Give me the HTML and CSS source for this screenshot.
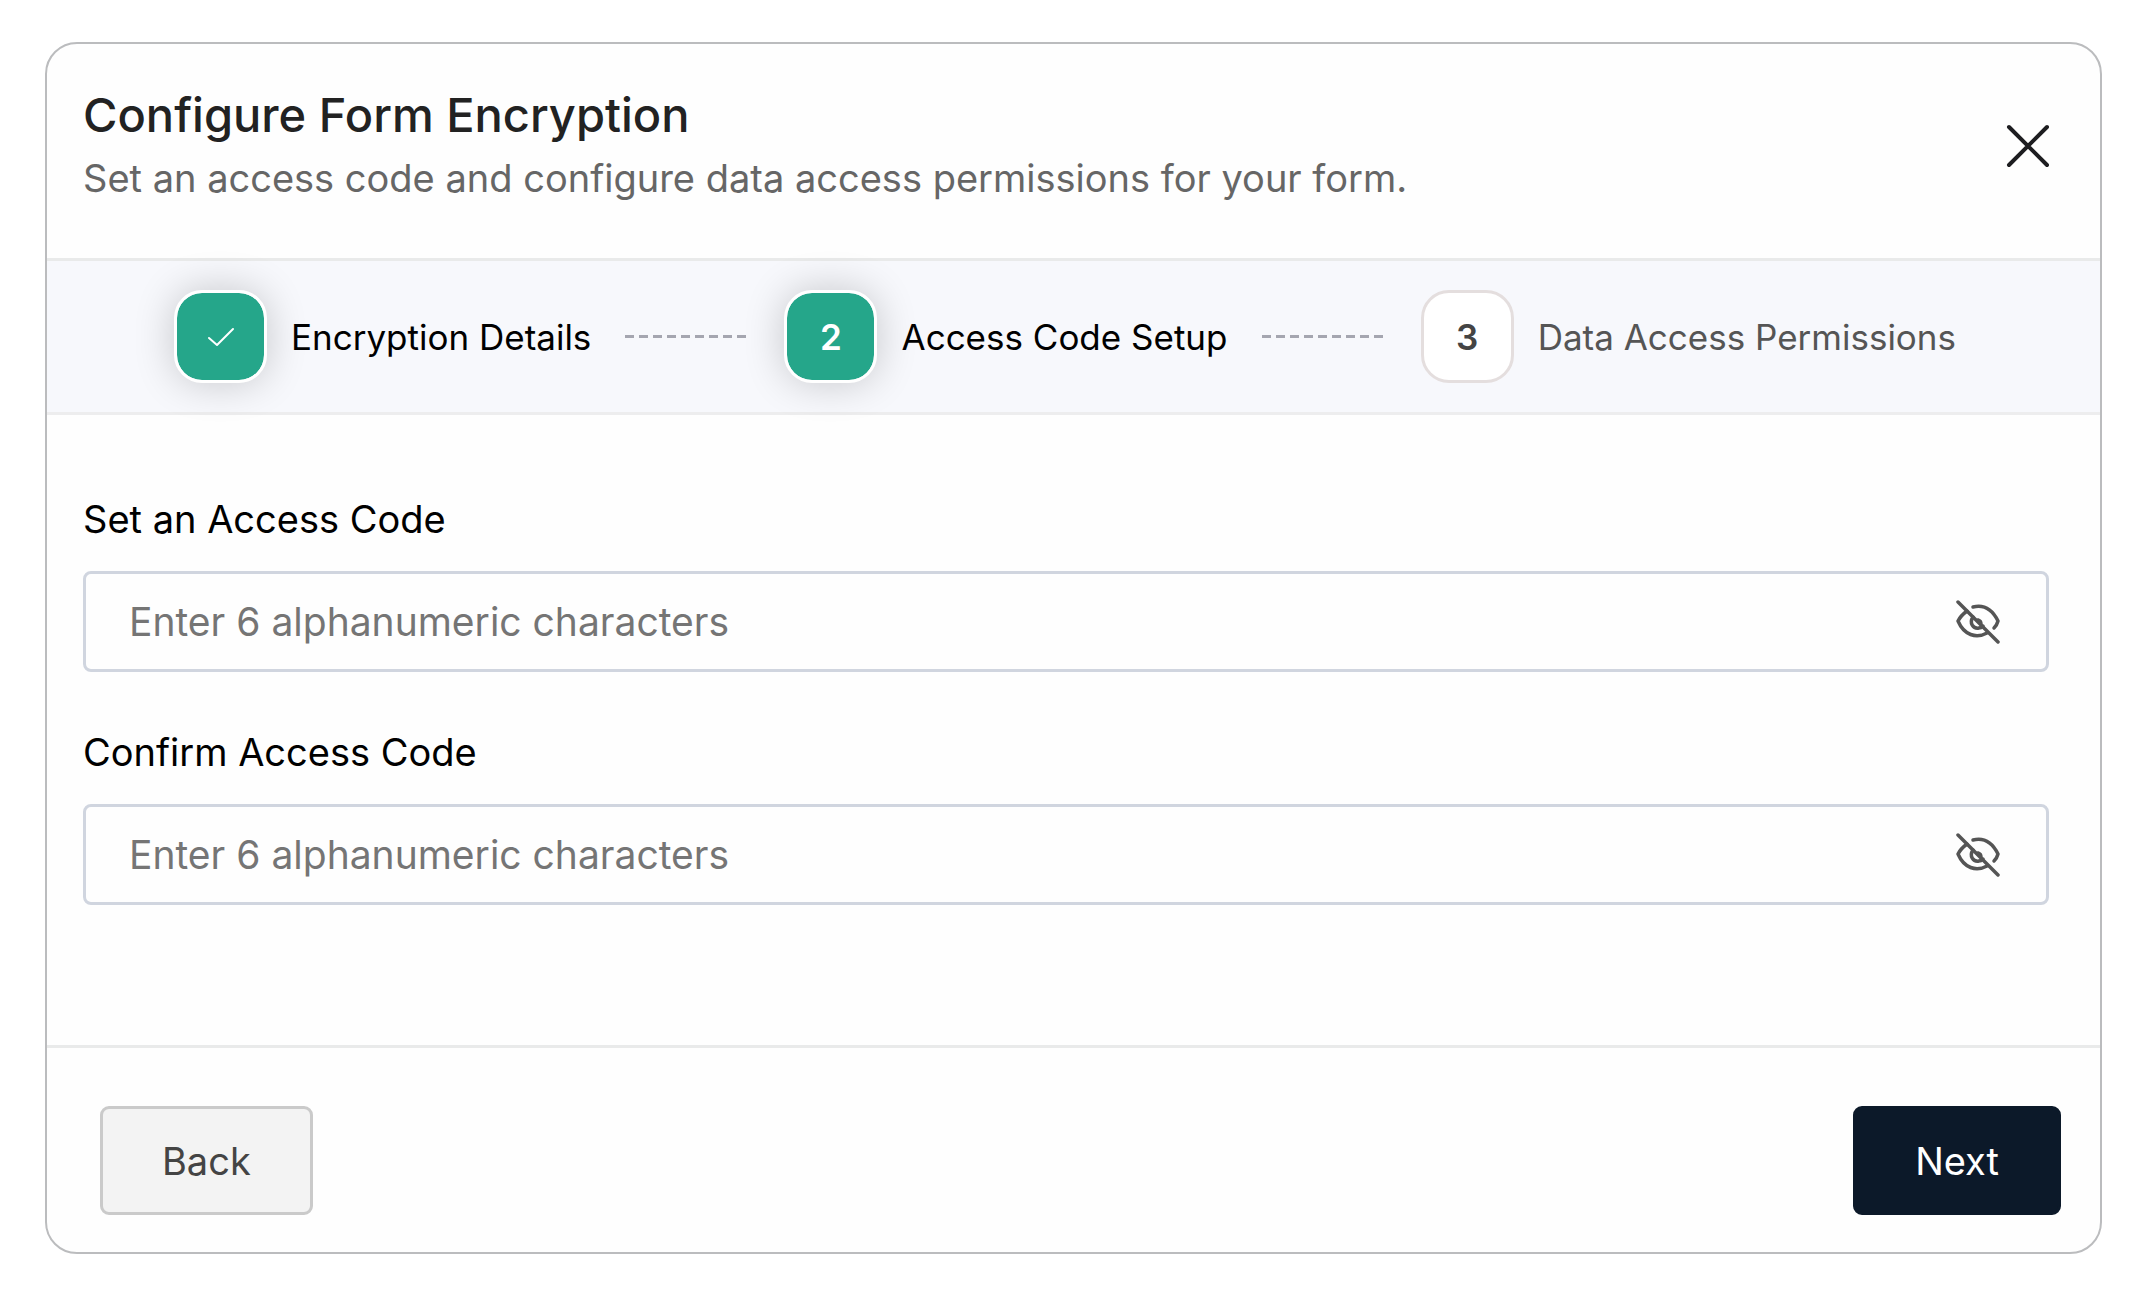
FILE: index.html
```html
<!DOCTYPE html>
<html lang="en">
<head>
<meta charset="utf-8">
<meta name="viewport" content="width=device-width, initial-scale=1">
<title>Configure Form Encryption</title>
<link rel="stylesheet" href="styles.css">
</head>
<body>
<main class="dialog">
  <header class="dialog-header">
    <div class="heading">
      <h1 class="title">Configure Form Encryption</h1>
      <p class="subtitle">Set an access code and configure data access permissions for your form.</p>
    </div>
    <button class="icon-button" type="button" aria-label="Close">
      <svg class="close-icon" viewBox="0 0 44 44" aria-hidden="true"><path d="M3 3L41 41M41 3L3 41"/></svg>
    </button>
  </header>

  <ol class="steps">
    <li class="step">
      <span class="badge badge-active">
        <svg class="check-icon" viewBox="0 0 28 20" aria-hidden="true"><path d="M2 11L10 18L26 2"/></svg>
      </span>
      <span class="step-label">Encryption Details</span>
    </li>
    <li class="connector" aria-hidden="true"></li>
    <li class="step" aria-current="step">
      <span class="badge badge-active">2</span>
      <span class="step-label">Access Code Setup</span>
    </li>
    <li class="connector" aria-hidden="true"></li>
    <li class="step">
      <span class="badge">3</span>
      <span class="step-label step-label-muted">Data Access Permissions</span>
    </li>
  </ol>

  <form class="dialog-form">
    <div class="fields">
      <div class="field">
        <label class="field-label" for="code">Set an Access Code</label>
        <div class="input-box">
          <input class="input" id="code" type="password" placeholder="Enter 6 alphanumeric characters">
          <button class="icon-button" type="button" aria-label="Show access code">
            <svg class="eye-icon" viewBox="0 0 44 44" stroke-width="3.5" aria-hidden="true"><path d="M2 2L42 42"/><path d="M17 7C29 4 37 11 42 21Q41 25 38 28"/><path d="M11 11C7 14 4 17 2 21C8 35 20 39 31 33"/><path d="M17 17C13 23 17 29 23 28Q25 28 27 26"/><path d="M22 20Q25 21 25 24"/></svg>
          </button>
        </div>
      </div>
      <div class="field">
        <label class="field-label" for="confirm">Confirm Access Code</label>
        <div class="input-box">
          <input class="input" id="confirm" type="password" placeholder="Enter 6 alphanumeric characters">
          <button class="icon-button" type="button" aria-label="Show confirmation code">
            <svg class="eye-icon" viewBox="0 0 44 44" stroke-width="3.5" aria-hidden="true"><path d="M2 2L42 42"/><path d="M17 7C29 4 37 11 42 21Q41 25 38 28"/><path d="M11 11C7 14 4 17 2 21C8 35 20 39 31 33"/><path d="M17 17C13 23 17 29 23 28Q25 28 27 26"/><path d="M22 20Q25 21 25 24"/></svg>
          </button>
        </div>
      </div>
    </div>
    <footer class="dialog-footer">
      <button class="button button-secondary" type="button">Back</button>
      <button class="button button-primary" type="submit">Next</button>
    </footer>
  </form>
</main>
</body>
</html>
```
FILE: styles.css
```css
* {
  box-sizing: border-box;
}

body {
  margin: 0;
  padding: 42px 42px 56px 45px;
  background: #fff;
  color: #000;
  font-family: Inter, "Liberation Sans", sans-serif;
  font-size: 38px;
  line-height: 46px;
  font-optical-sizing: none;
}

button,
input {
  font: inherit;
  font-optical-sizing: none;
}

svg {
  display: block;
  fill: none;
  stroke: currentColor;
  stroke-linecap: round;
  stroke-linejoin: round;
}

.dialog {
  border: 2px solid #bbbcbe;
  border-radius: 32px;
  background: #fefefe;
}

.dialog-header {
  display: flex;
  align-items: center;
  justify-content: space-between;
  gap: 32px;
  padding: 46px 50px 57px 36px;
  border-bottom: 3px solid #e9eaea;
}

.title {
  margin: 0 0 15px;
  color: #222;
  font-size: 47px;
  font-weight: 500;
  line-height: 50px;
}

.subtitle {
  margin: 0;
  color: #666;
}

.icon-button {
  flex: none;
  padding: 0;
  border: 0;
  background: none;
  color: #555;
  cursor: pointer;
}

.close-icon {
  width: 44px;
  height: 44px;
  color: #1d1d20;
  stroke-width: 4;
}

.steps {
  display: flex;
  align-items: center;
  margin: 0;
  padding: 29px 144px 29px 127px;
  border-bottom: 3px solid #ededee;
  background: #f7f8fc;
  font-size: 35px;
  list-style: none;
}

.step {
  display: flex;
  align-items: center;
  gap: 24px;
}

.badge {
  display: grid;
  flex: none;
  place-items: center;
  width: 93px;
  height: 93px;
  border: 3px solid #e4dede;
  border-radius: 28px;
  background: #fff;
  color: #444;
  font-weight: 600;
}

.badge-active {
  border-color: #fff;
  background: #25a68a;
  background-clip: padding-box;
  box-shadow: 0 0 40px rgba(0, 0, 0, 0.2);
  color: #fff;
}

.check-icon {
  width: 28px;
  height: 20px;
  stroke-width: 2;
}

.step-label-muted {
  color: #555;
}

.connector {
  flex: 1;
  height: 3px;
  margin: 0 34px;
  background: repeating-linear-gradient(to right, #a5a6b0 0 9px, transparent 9px 14px);
}

.fields {
  display: grid;
  gap: 57px;
  padding: 81px 51px 140px 36px;
}

.field {
  display: grid;
  gap: 29px;
}

.input-box {
  display: flex;
  align-items: center;
  gap: 24px;
  height: 101px;
  padding: 0 46px 0 43px;
  border: 3px solid #d0d5df;
  border-radius: 8px;
}

.input {
  flex: 1;
  min-width: 0;
  padding: 0;
  border: 0;
  outline: 0;
  background: none;
  font-size: 39px;
}

.input::placeholder {
  color: #757575;
  opacity: 1;
}

.eye-icon {
  width: 44px;
  height: 44px;
}

.dialog-footer {
  display: flex;
  justify-content: space-between;
  padding: 58px 39px 37px 53px;
  border-top: 3px solid #e9eaea;
}

.button {
  height: 109px;
  padding: 0 59px;
  border: 3px solid;
  border-radius: 9px;
  cursor: pointer;
}

.button-secondary {
  border-color: #cacaca;
  background: #f3f3f3;
  color: #444;
}

.button-primary {
  border-color: #0c1929;
  background: #0c1929;
  color: #fff;
}
```
